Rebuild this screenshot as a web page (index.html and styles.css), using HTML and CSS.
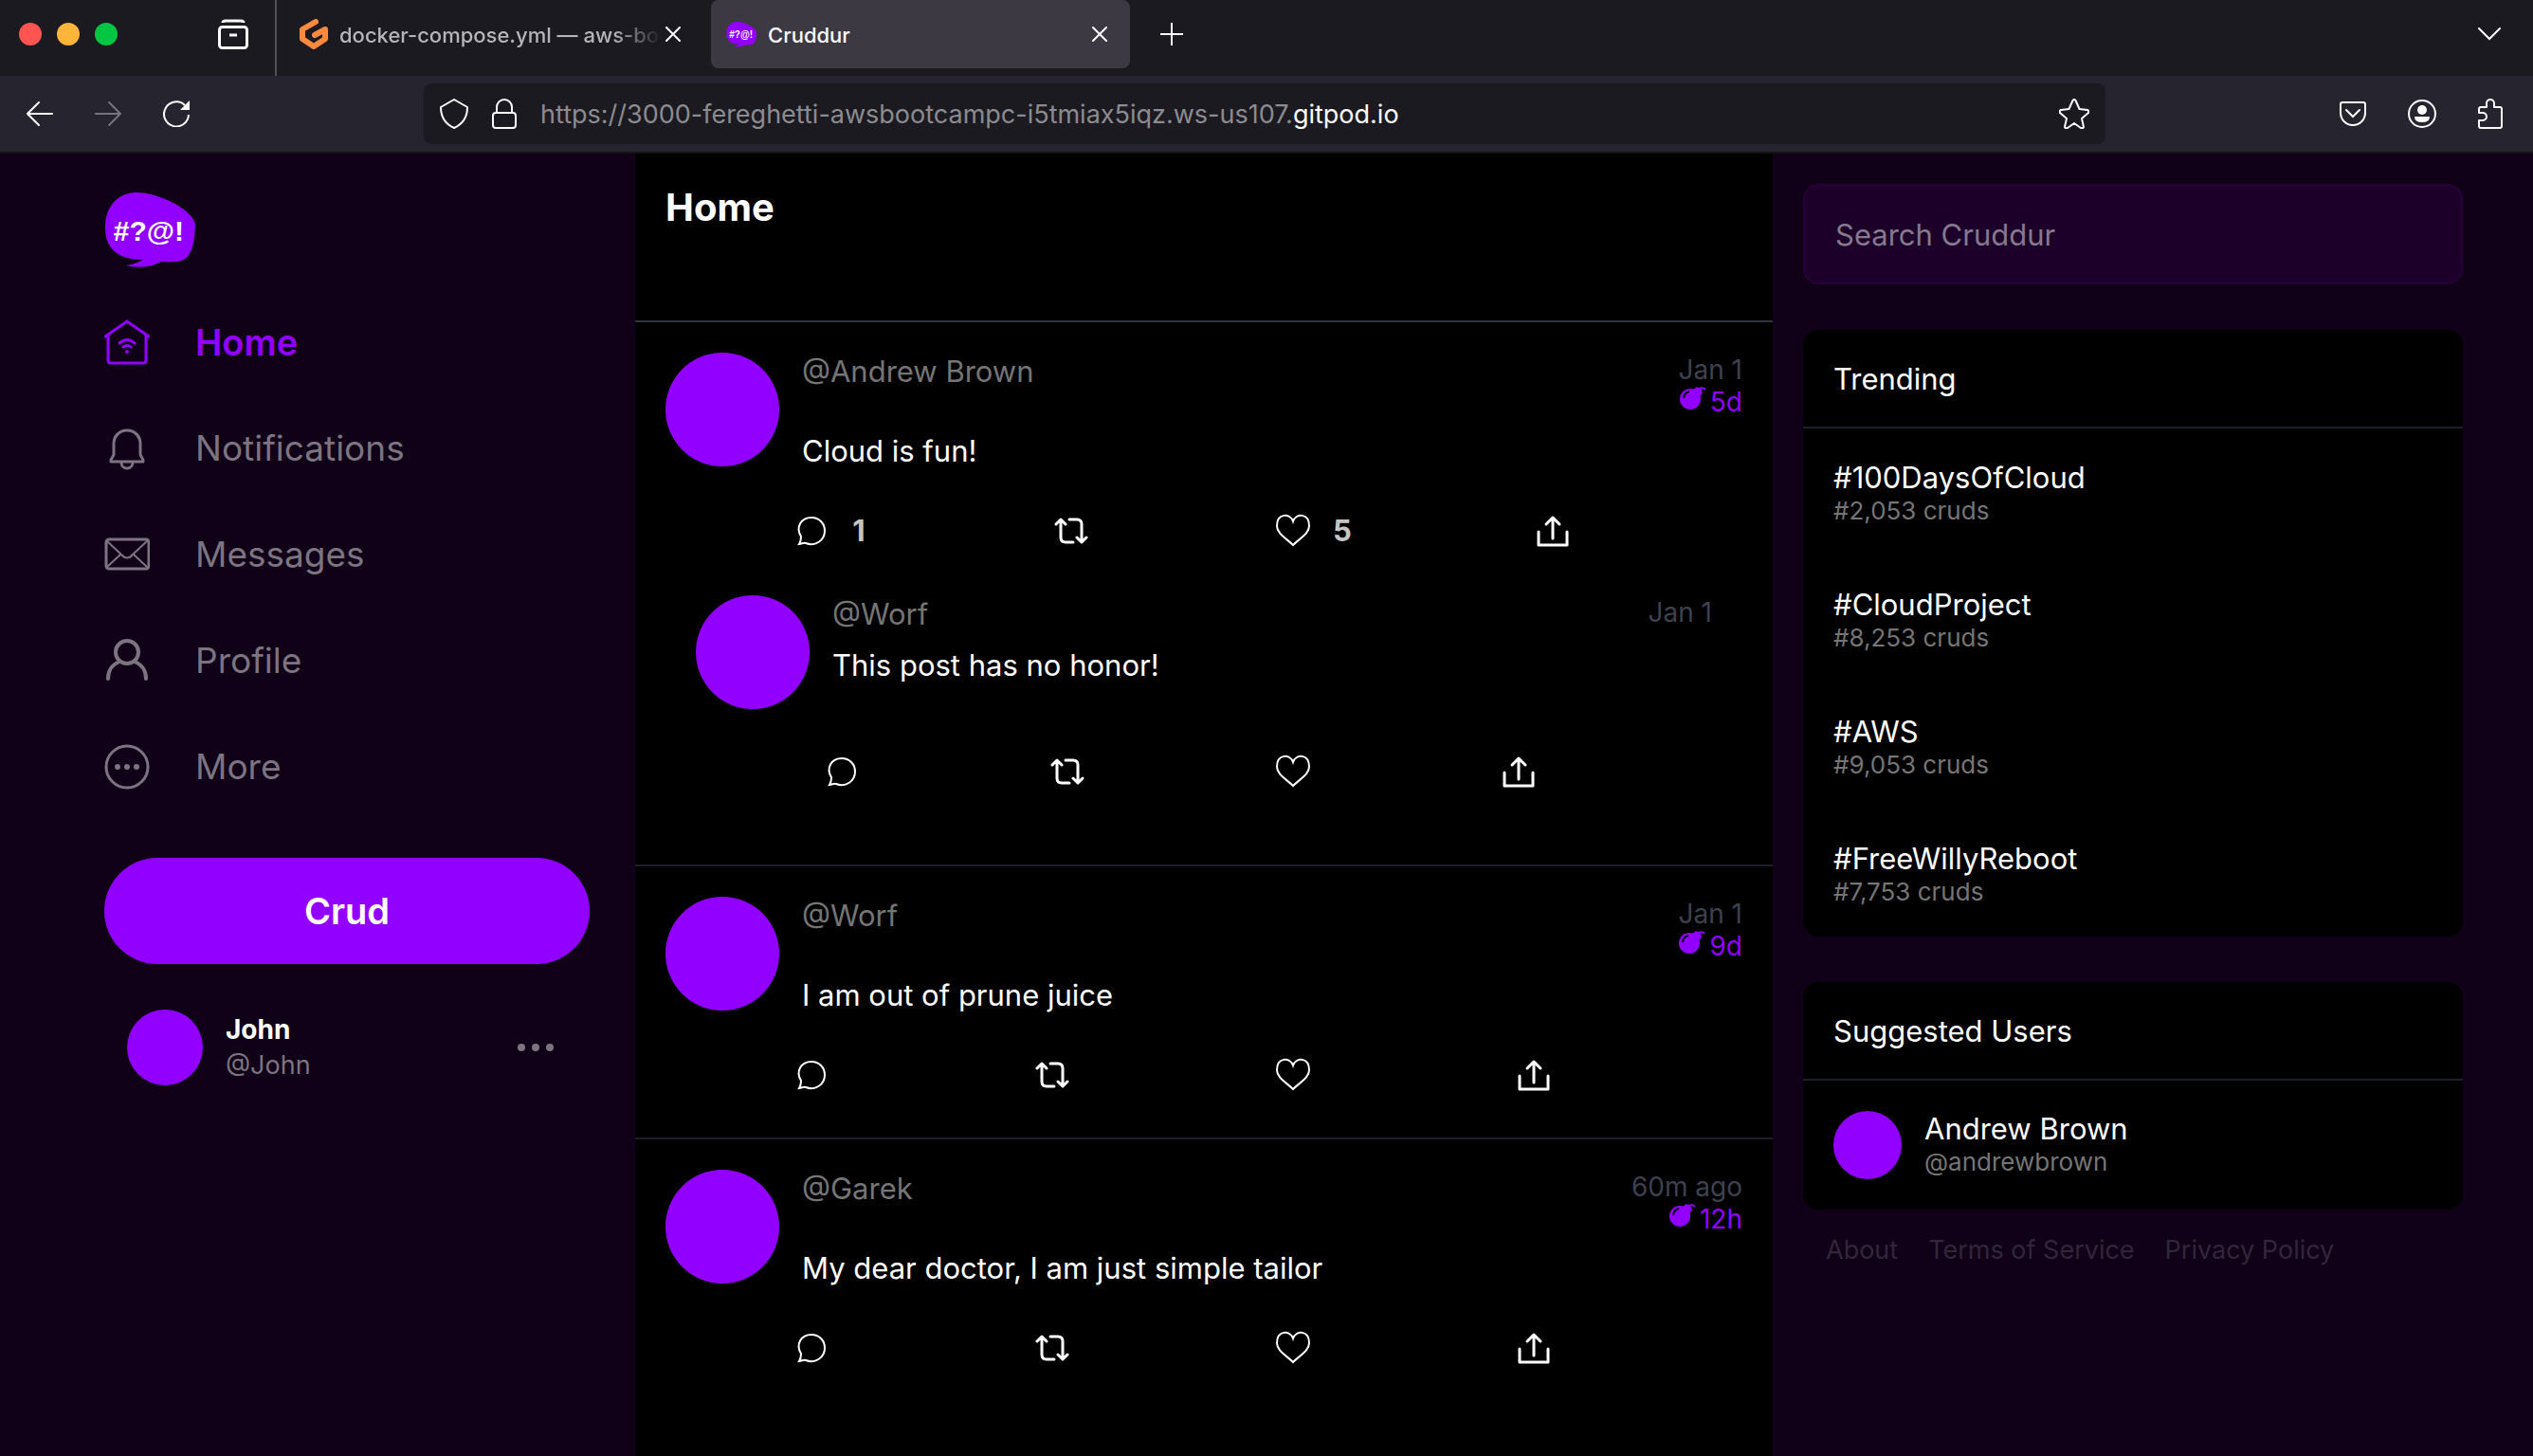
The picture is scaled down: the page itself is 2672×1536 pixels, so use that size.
FILE: index.html
```html
<!DOCTYPE html>
<html lang="en">
<head>
<meta charset="utf-8">
<title>Cruddur</title>
<link rel="stylesheet" href="styles.css">
</head>
<body>
<svg class="defs" aria-hidden="true">
  <symbol id="comment" viewBox="0 0 36 36"><path d="M5 32c2-3 2-5 2-8C1 14 7 4 18 4c8 0 14 6 14 14 0 10-10 17-20 13-2-.7-4 .6-7 1Z" fill="none" stroke="currentColor" stroke-width="2"/></symbol>
  <symbol id="repost" viewBox="0 0 36 36"><path d="M2 11 7 6l5 5M7 7v18q0 5 5 5h8M34 25l-5 5-5-5M29 29V11q0-5-5-5h-8" fill="none" stroke="currentColor" stroke-width="3" stroke-linecap="round" stroke-linejoin="round"/></symbol>
  <symbol id="heart" viewBox="0 0 36 36"><path d="M18 8C15-1 1-1 1 13c0 8 10 13 17 20 7-7 17-12 17-20C35-1 21-1 18 8Z" fill="none" stroke="currentColor" stroke-width="2"/></symbol>
  <symbol id="share" viewBox="0 0 36 36"><path d="M18 26V4M11 11l7-7 7 7M3 19v14h30V19" fill="none" stroke="currentColor" stroke-width="3" stroke-linecap="round" stroke-linejoin="round"/></symbol>
  <symbol id="bomb" viewBox="0 0 28 28"><circle cx="11" cy="14" r="11" fill="currentColor"/><path d="m14 4 4-3 5 3 1 4-4 4Z" fill="currentColor"/><path d="M20 3q5-2 7 1" fill="none" stroke="currentColor" stroke-width="2"/><path d="M4 13q1-6 6-7" fill="none" stroke="#000" stroke-width="2"/></symbol>
  <symbol id="close" viewBox="0 0 16 16"><path d="m1 1 14 14M15 1 1 15" stroke="currentColor" stroke-width="2" stroke-linecap="round"/></symbol>
</svg>

<header class="browser">
  <div class="tabs">
    <div class="lights"><span class="light red"></span><span class="light amber"></span><span class="light green"></span></div>
    <button class="icon-button recent" aria-label="Recent browsing"><svg width="32" height="32" viewBox="0 0 32 32" fill="none" stroke="currentColor" stroke-width="3"><rect x="1.500" y="8.500" width="29" height="22" rx="3"/><path d="M5 4q0-2 3-2h16q3 0 3 2M12 17h8"/></svg></button>
    <div class="tab tab-idle">
      <svg width="30" height="32" viewBox="0 0 30 32" fill="none" stroke="#ff8a3d" stroke-width="6" stroke-linejoin="round" stroke-linecap="round"><path d="M17 3 3 11v10l12 8 12-8V11l-11 6"/></svg>
      <span class="tab-title faded">docker-compose.yml — aws-bootcamp</span>
      <button class="icon-button" aria-label="Close tab"><svg width="16" height="16"><use href="#close"/></svg></button>
    </div>
    <div class="tab tab-active">
      <svg width="32" height="28" viewBox="0 0 96 80"><path fill="#9200ff" d="M1 38C1 15 15 1 34 1c23 0 60 18 62 34-1 28-7 40-23 39-5 1-9 0-13 0-10 6-24 7-37 4 8-1 14-4 18-6C18 72 1 63 1 38Z"/><text x="47" y="52" text-anchor="middle" class="logo-text">#?@!</text></svg>
      <span class="tab-title">Cruddur</span>
      <button class="icon-button" aria-label="Close tab"><svg width="16" height="16"><use href="#close"/></svg></button>
    </div>
    <button class="icon-button" aria-label="New tab"><svg width="24" height="24" viewBox="0 0 24 24" stroke="currentColor" stroke-width="2"><path d="M12 0v24M0 12h24"/></svg></button>
    <button class="icon-button all-tabs" aria-label="List all tabs"><svg width="24" height="14" viewBox="0 0 24 14" fill="none" stroke="currentColor" stroke-width="2" stroke-linecap="round"><path d="m1 1 11 11L23 1"/></svg></button>
  </div>
  <div class="toolbar">
    <nav class="history">
      <button class="icon-button" aria-label="Back"><svg width="28" height="28" viewBox="0 0 28 28" fill="none" stroke="currentColor" stroke-width="2" stroke-linecap="round"><path d="M27 14H1M13 2 1 14l12 12"/></svg></button>
      <button class="icon-button dim" aria-label="Forward" disabled><svg width="28" height="28" viewBox="0 0 28 28" fill="none" stroke="currentColor" stroke-width="2" stroke-linecap="round"><path d="M1 14h26M15 2l12 12-12 12"/></svg></button>
      <button class="icon-button" aria-label="Reload"><svg width="28" height="28" viewBox="0 0 28 28" fill="none" stroke="currentColor" stroke-width="2"><path d="M27 15a13 13 0 1 1-4-10"/><path d="M28 0v10H18Z" fill="currentColor" stroke="none"/></svg></button>
    </nav>
    <div class="address">
      <svg width="30" height="32" viewBox="0 0 30 32" fill="none" stroke="currentColor" stroke-width="2"><path d="M15 1 29 9c0 9-3 17-14 22C4 26 1 18 1 9Z" stroke-linejoin="round"/></svg>
      <svg width="26" height="32" viewBox="0 0 26 32" fill="none" stroke="currentColor" stroke-width="2"><rect x="1" y="15" width="24" height="16" rx="3"/><path d="M5 15V9a8 8 0 0 1 16 0v6"/></svg>
      <a class="url" href="#">https://3000-fereghetti-awsbootcampc-i5tmiax5iqz.ws-us107.<span class="domain">gitpod.io</span></a>
      <button class="icon-button" aria-label="Bookmark this page"><svg width="32" height="32" viewBox="0 0 32 32" fill="none" stroke="currentColor" stroke-width="2" stroke-linejoin="round"><path d="M14.500 2q1.500-2 3 0l4 9 8.500 1q2 1 1 3l-7 6 2 9q-1 2-3 1l-7-5-7 5q-2 1-3-1l2-9-7-6q-1-2 1-3l8.500-1Z"/></svg></button>
    </div>
    <div class="extras">
      <button class="icon-button" aria-label="Save to Pocket"><svg width="28" height="26" viewBox="0 0 28 26" fill="none" stroke="currentColor" stroke-width="2" stroke-linecap="round"><path d="M3 1h22q2 0 2 2v9a13 13 0 0 1-26 0V3q0-2 2-2ZM7 9l7 7 7-7"/></svg></button>
      <button class="icon-button" aria-label="Account"><svg width="30" height="30" viewBox="0 0 30 30"><circle cx="15" cy="15" r="14" fill="none" stroke="currentColor" stroke-width="2"/><circle cx="15" cy="11" r="5" fill="currentColor"/><path d="M7 18h16q0 6-8 6t-8-6" fill="currentColor"/></svg></button>
      <button class="icon-button" aria-label="Extensions"><svg width="28" height="32" viewBox="0 0 28 32" fill="none" stroke="currentColor" stroke-width="2" stroke-linejoin="round"><path d="M1 15V11q0-2 2-2h6V5a4 4 0 0 1 8 0v4h6q2 0 2 2v18q0 2-2 2H3q-2 0-2-2v-6h4a4 4 0 0 0 0-8Z"/></svg></button>
    </div>
  </div>
</header>

<div class="app">
  <aside class="sidebar">
    <a class="brand" href="#" aria-label="Cruddur"><svg width="96" height="80" viewBox="0 0 96 80"><path fill="#9200ff" d="M1 38C1 15 15 1 34 1c23 0 60 18 62 34-1 28-7 40-23 39-5 1-9 0-13 0-10 6-24 7-37 4 8-1 14-4 18-6C18 72 1 63 1 38Z"/><text x="47" y="52" text-anchor="middle" class="logo-text">#?@!</text></svg></a>
    <nav class="menu">
      <a class="menu-item current" href="#"><svg width="48" height="48" viewBox="0 0 48 48" fill="none" stroke="currentColor" stroke-width="3" stroke-linecap="round"><path d="M1 18 24 2l23 16"/><path d="M4 17v26q0 3 3 3h34q3 0 3-3V17"/><path d="M16 25q8-7 16 0M20 29q4-3 8 0"/><circle cx="24" cy="34" r="2" fill="currentColor" stroke="none"/></svg>Home</a>
      <a class="menu-item" href="#"><svg width="48" height="48" viewBox="0 0 48 48" fill="none" stroke="currentColor" stroke-width="3"><path d="M24 5c-9 0-14 7-14 14v11c0 3-4 5-3 8h34c1-3-3-5-3-8V19c0-7-5-14-14-14ZM18 39c0 8 12 8 12 0" stroke-linejoin="round"/></svg>Notifications</a>
      <a class="menu-item" href="#"><svg width="48" height="48" viewBox="0 0 48 48" fill="none" stroke="currentColor" stroke-width="3"><rect x="2" y="8" width="45" height="31" rx="3"/><path d="m2 9 16 15q6 7 12 0L46 9M2 38l15-14M46 38 31 24" stroke-width="2"/></svg>Messages</a>
      <a class="menu-item" href="#"><svg width="48" height="48" viewBox="0 0 48 48" fill="none" stroke="currentColor" stroke-width="4" stroke-linecap="round"><circle cx="24" cy="15" r="12"/><path d="M4 43c0-8 4-15 12-18M44 43c0-8-4-15-12-18"/></svg>Profile</a>
      <a class="menu-item" href="#"><svg width="48" height="48" viewBox="0 0 48 48"><circle cx="24" cy="24" r="22" fill="none" stroke="currentColor" stroke-width="3"/><g fill="currentColor"><circle cx="14" cy="24" r="3"/><circle cx="24" cy="24" r="3"/><circle cx="34" cy="24" r="3"/></g></svg>More</a>
    </nav>
    <button class="crud-button">Crud</button>
    <div class="account">
      <span class="avatar avatar-account"></span>
      <div class="account-name"><strong>John</strong><span>@John</span></div>
      <button class="icon-button account-more" aria-label="Account options"><svg width="38" height="8" viewBox="0 0 38 8" fill="currentColor"><circle cx="4" cy="4" r="4"/><circle cx="19" cy="4" r="4"/><circle cx="34" cy="4" r="4"/></svg></button>
    </div>
  </aside>

  <main class="feed">
    <header class="feed-header"><h1>Home</h1></header>

    <article class="post">
      <div class="post-body">
        <span class="avatar"></span>
        <div class="post-text"><a class="handle" href="#">@Andrew Brown</a><p class="message">Cloud is fun!</p></div>
        <div class="post-time"><time>Jan 1</time><span class="expires"><svg width="28" height="28"><use href="#bomb"/></svg>5d</span></div>
      </div>
      <div class="actions">
        <button class="action" aria-label="Reply"><svg width="36" height="36"><use href="#comment"/></svg><span class="count">1</span></button>
        <button class="action" aria-label="Repost"><svg width="36" height="36"><use href="#repost"/></svg></button>
        <button class="action" aria-label="Like"><svg width="36" height="36"><use href="#heart"/></svg><span class="count">5</span></button>
        <button class="action" aria-label="Share"><svg width="36" height="36"><use href="#share"/></svg></button>
      </div>
      <div class="replies">
        <article class="reply">
          <div class="post-body">
            <span class="avatar"></span>
            <div class="post-text"><a class="handle" href="#">@Worf</a><p class="message">This post has no honor!</p></div>
            <div class="post-time"><time>Jan 1</time></div>
          </div>
          <div class="actions">
            <button class="action" aria-label="Reply"><svg width="36" height="36"><use href="#comment"/></svg></button>
            <button class="action" aria-label="Repost"><svg width="36" height="36"><use href="#repost"/></svg></button>
            <button class="action" aria-label="Like"><svg width="36" height="36"><use href="#heart"/></svg></button>
            <button class="action" aria-label="Share"><svg width="36" height="36"><use href="#share"/></svg></button>
          </div>
        </article>
      </div>
    </article>

    <article class="post">
      <div class="post-body">
        <span class="avatar"></span>
        <div class="post-text"><a class="handle" href="#">@Worf</a><p class="message">I am out of prune juice</p></div>
        <div class="post-time"><time>Jan 1</time><span class="expires"><svg width="28" height="28"><use href="#bomb"/></svg>9d</span></div>
      </div>
      <div class="actions">
        <button class="action" aria-label="Reply"><svg width="36" height="36"><use href="#comment"/></svg></button>
        <button class="action" aria-label="Repost"><svg width="36" height="36"><use href="#repost"/></svg></button>
        <button class="action" aria-label="Like"><svg width="36" height="36"><use href="#heart"/></svg></button>
        <button class="action" aria-label="Share"><svg width="36" height="36"><use href="#share"/></svg></button>
      </div>
    </article>

    <article class="post">
      <div class="post-body">
        <span class="avatar"></span>
        <div class="post-text"><a class="handle" href="#">@Garek</a><p class="message">My dear doctor, I am just simple tailor</p></div>
        <div class="post-time"><time>60m ago</time><span class="expires"><svg width="28" height="28"><use href="#bomb"/></svg>12h</span></div>
      </div>
      <div class="actions">
        <button class="action" aria-label="Reply"><svg width="36" height="36"><use href="#comment"/></svg></button>
        <button class="action" aria-label="Repost"><svg width="36" height="36"><use href="#repost"/></svg></button>
        <button class="action" aria-label="Like"><svg width="36" height="36"><use href="#heart"/></svg></button>
        <button class="action" aria-label="Share"><svg width="36" height="36"><use href="#share"/></svg></button>
      </div>
    </article>
  </main>

  <aside class="discover">
    <input class="search" type="search" placeholder="Search Cruddur" aria-label="Search Cruddur">
    <section class="card">
      <h2>Trending</h2>
      <a class="trend" href="#"><span class="title">#100DaysOfCloud</span><span class="detail">#2,053 cruds</span></a>
      <a class="trend" href="#"><span class="title">#CloudProject</span><span class="detail">#8,253 cruds</span></a>
      <a class="trend" href="#"><span class="title">#AWS</span><span class="detail">#9,053 cruds</span></a>
      <a class="trend" href="#"><span class="title">#FreeWillyReboot</span><span class="detail">#7,753 cruds</span></a>
    </section>
    <section class="card">
      <h2>Suggested Users</h2>
      <a class="suggestion" href="#"><span class="avatar avatar-suggested"></span><span class="suggestion-name"><span class="title">Andrew Brown</span><span class="detail">@andrewbrown</span></span></a>
    </section>
    <footer class="links"><a href="#">About</a><a href="#">Terms of Service</a><a href="#">Privacy Policy</a></footer>
  </aside>
</div>
</body>
</html>
```
FILE: styles.css
```css
* { box-sizing: border-box; }

body {
  margin: 0;
  min-height: 100vh;
  display: flex;
  flex-direction: column;
  background: #100018;
  color: #fff;
  font-family: Inter, "Liberation Sans", sans-serif;
  font-size: 31px;
  line-height: 38px;
}

a { color: inherit; text-decoration: none; }
h1, h2, p { margin: 0; }
svg { display: block; flex: none; }
button { border: 0; padding: 0; background: none; color: inherit; font: inherit; cursor: pointer; }

.defs { width: 0; height: 0; position: absolute; }
.logo-text { font: bold 30px "Liberation Sans", sans-serif; fill: #fff; }

/* Browser chrome */
.browser { border-bottom: 2px solid #131313; color: #fbfbfe; }
.icon-button { display: flex; flex: none; }

.tabs {
  display: flex;
  align-items: center;
  height: 80px;
  padding: 0 34px 8px 20px;
  background: #1b1a20;
}
.lights { display: flex; gap: 16px; }
.light { width: 24px; height: 24px; border-radius: 50%; }
.red { background: #ff5450; }
.amber { background: #ffb43a; }
.green { background: #00c641; }
.recent { margin: 0 28px 0 106px; }

.tab { display: flex; align-items: center; gap: 12px; height: 72px; font-size: 22px; font-weight: 500; }
.tab-idle {
  width: 460px;
  height: 80px;
  margin-bottom: -8px;
  padding: 0 32px 8px 24px;
  border-left: 2px solid #4f4e55;
  color: #b5b4b8;
}
.tab-idle .icon-button { color: #fbfbfe; margin-left: -8px; }
.tab-active {
  width: 442px;
  margin-right: 32px;
  padding: 0 24px 0 16px;
  border-radius: 8px;
  background: #3c3943;
}
.tab-title { flex: 1; min-width: 0; padding-top: 2px; overflow: hidden; white-space: nowrap; }
.faded { mask-image: linear-gradient(to right, #000 85%, transparent); }
.all-tabs { margin-left: auto; }

.toolbar {
  display: flex;
  align-items: center;
  height: 80px;
  padding: 0 30px 0 28px;
  background: #26242e;
}
.history { display: flex; gap: 44px; margin-right: 247px; }
.dim { color: #75747b; }
.address {
  flex: 1;
  min-width: 0;
  display: flex;
  align-items: center;
  height: 64px;
  gap: 25px;
  padding: 0 17px;
  border-radius: 8px;
  background: #1b1a20;
}
.url { flex: 1; min-width: 0; padding-top: 2px; overflow: hidden; white-space: nowrap; font-size: 27px; color: #8c8b90; }
.domain { color: #fbfbfe; }
.extras { display: flex; align-items: center; gap: 44px; margin-left: 247px; }

/* Page */
.app { flex: 1; display: grid; grid-template-columns: 670fr 1200fr 802fr; }

.avatar { flex: none; width: 120px; height: 120px; border-radius: 50%; background: #9200ff; }
.avatar-account { width: 80px; height: 80px; }
.avatar-suggested { width: 72px; height: 72px; }

.sidebar { padding: 40px 48px 40px 110px; }
.brand { display: block; }
.menu { margin-top: 23px; }
.menu-item {
  display: flex;
  align-items: center;
  gap: 48px;
  height: 112px;
  font-size: 37px;
  color: #7c7480;
}
.current { color: #9200ff; font-size: 38px; font-weight: 600; }
.crud-button {
  width: 100%;
  height: 112px;
  margin-top: 40px;
  border-radius: 56px;
  background: #9200ff;
  font-size: 38px;
  font-weight: 600;
}
.account { display: flex; align-items: center; gap: 24px; padding: 48px 38px 0 24px; }
.account-name { display: flex; flex-direction: column; font-size: 27px; color: #7c7480; }
.account-name strong { color: #fff; font-size: 28px; }
.account-more { margin-left: auto; color: #7c7480; }

.feed { background: #000; }
.feed-header { height: 178px; padding: 38px 32px; border-bottom: 2px solid #2f3540; }
h1 { font-size: 40px; line-height: 38px; font-weight: 700; }

.post { padding: 32px; border-bottom: 2px solid #1c1f2b; }
.post:last-child { border-bottom: 0; }
.post-body { display: flex; gap: 24px; min-height: 154px; }
.post-text {
  flex: 1;
  min-width: 0;
  display: flex;
  flex-direction: column;
  align-items: flex-start;
  padding-top: 1px;
}
.handle { color: #757575; }
.message { margin-top: 46px; }
.post-time {
  display: flex;
  flex-direction: column;
  align-items: flex-end;
  padding-top: 1px;
  font-size: 28px;
  line-height: 34px;
  color: #3d4150;
}
.expires { display: flex; gap: 4px; color: #9200ff; }
.actions { display: flex; margin-left: 120px; }
.action {
  flex: 1 1 auto;
  display: flex;
  align-items: center;
  gap: 24px;
  height: 68px;
  padding-left: 16px;
}
.count { width: 16px; font-weight: 700; color: #c4c4c4; }
.replies { margin-top: 2px; }
.reply { padding: 32px; }
.reply .post-body { min-height: 152px; }
.reply .message { margin-top: 16px; }

.discover { padding: 32px 74px 32px 32px; }
.search {
  display: block;
  width: 100%;
  height: 106px;
  padding: 0 32px;
  border: 2px solid #26003a;
  border-radius: 16px;
  outline: 0;
  appearance: none;
  background: #1c0029;
  color: #fff;
  font: inherit;
}
.search::placeholder { color: #86788f; opacity: 1; }
.card { margin-top: 48px; border-radius: 16px; background: #000; }
h2 { padding: 33px 32px 31px; border-bottom: 2px solid #1c1f2b; font-size: 31px; line-height: 38px; font-weight: 400; }
.trend { display: block; padding: 33px 32px 31px; }
.title, .detail { display: block; }
.detail { font-size: 26px; line-height: 32px; color: #757575; }
.suggestion { display: flex; gap: 24px; padding: 32px; }
.links { display: flex; gap: 32px; padding: 24px; font-size: 27px; color: #32263a; }
```
